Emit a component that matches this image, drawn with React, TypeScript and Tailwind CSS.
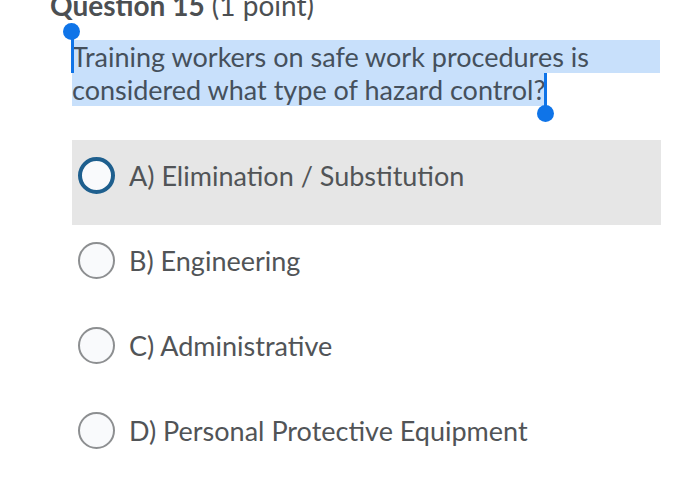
type OptionRowProps = {
  label: string;
  active?: boolean;
};

function Radio({ active }: { active?: boolean }) {
  return (
    <span
      className={`block h-[37px] w-[37px] shrink-0 rounded-full bg-[#f9fafc] ${
        active ? 'border-[4px] border-[#1e5f8e]' : 'border-2 border-[#8d8f91]'
      }`}
    />
  );
}

function OptionRow({ label, active }: OptionRowProps) {
  return (
    <div
      className={`flex h-[85px] items-start gap-[14px] pl-[6px] pt-[17px] ${
        active ? 'bg-[#e6e6e6]' : ''
      }`}
    >
      <Radio active={active} />
      <span className="text-[27px] leading-[37px] text-[#515457]">{label}</span>
    </div>
  );
}

export default function App() {
  return (
    <div
      className="flex h-[490px] w-[700px] flex-col overflow-hidden bg-white"
      style={{ fontFamily: 'Lato, "Noto Sans", sans-serif' }}
    >
      <h1 className="-mt-[12px] pl-[50px] text-[28px] leading-[34px] text-[#4c4f52]">
        <span className="font-bold">Question 15</span> <span>(1 point)</span>
      </h1>

      {/* question text, shown with a text selection on it */}
      <div className="ml-[72px] mt-[18px] flex w-[588px] flex-col text-[27px] leading-[33px] text-[#45505c]">
        <div className="relative h-[33px] bg-[#c8e0fb]">
          Training workers on safe work procedures is
          <span className="absolute -left-[9px] -top-[17px] h-[17px] w-[17px] rounded-full bg-[#0f74e8]" />
          <span className="absolute -left-[1px] -top-[2px] h-[35px] w-[3px] bg-[#0f74e8]" />
        </div>
        <div className="relative h-[33px] w-fit bg-[#c8e0fb]">
          considered what type of hazard control?
          <span className="absolute -right-[2px] top-0 h-[36px] w-[3px] bg-[#0f74e8]" />
          <span className="absolute -right-[9px] top-[32px] h-[17px] w-[17px] rounded-full bg-[#0f74e8]" />
        </div>
      </div>

      <div className="ml-[72px] mt-[34px] flex w-[589px] flex-col">
        <OptionRow label="A) Elimination / Substitution" active />
        <OptionRow label="B) Engineering" />
        <OptionRow label="C) Administrative" />
        <OptionRow label="D) Personal Protective Equipment" />
      </div>
    </div>
  );
}
